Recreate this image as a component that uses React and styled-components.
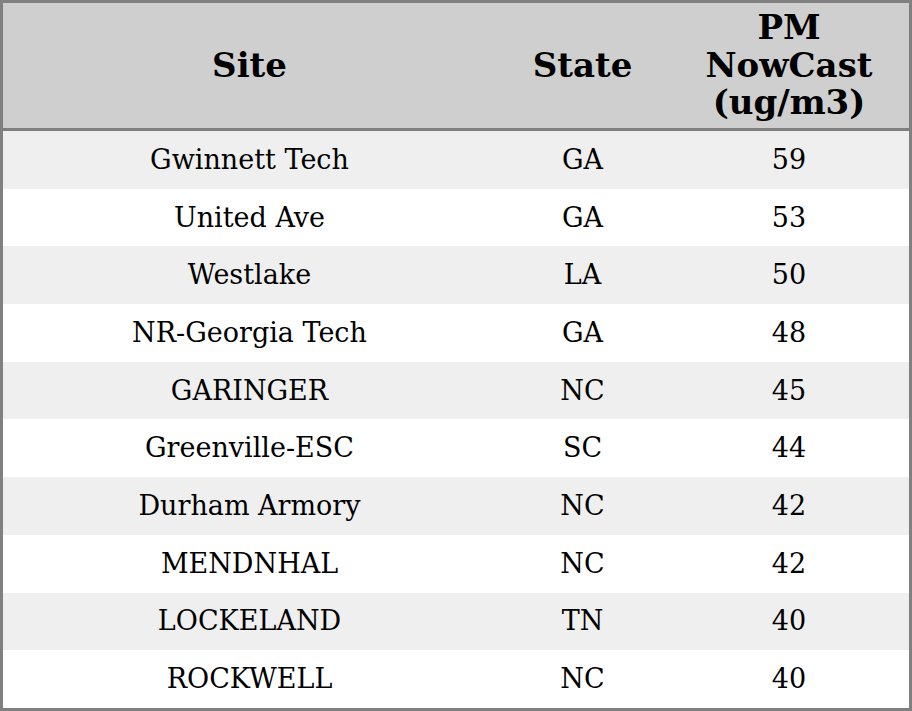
import styled, { createGlobalStyle } from "styled-components";

const rows = [
  ["Gwinnett Tech", "GA", 59],
  ["United Ave", "GA", 53],
  ["Westlake", "LA", 50],
  ["NR-Georgia Tech", "GA", 48],
  ["GARINGER", "NC", 45],
  ["Greenville-ESC", "SC", 44],
  ["Durham Armory", "NC", 42],
  ["MENDNHAL", "NC", 42],
  ["LOCKELAND", "TN", 40],
  ["ROCKWELL", "NC", 40],
];

const GlobalStyle = createGlobalStyle`
  html, body {
    margin: 0;
    padding: 0;
    background: #fff;
  }
  body {
    font-family: "DejaVu Serif", serif;
    color: #000;
  }
`;

const Table = styled.table`
  width: 912px;
  border-collapse: separate;
  border-spacing: 0;
  table-layout: fixed;
  border: 3px solid #808080;
  box-sizing: border-box;
  font-family: "DejaVu Serif", serif;
`;

const HeadRow = styled.tr`
  background: #cfcfcf;
`;

const Th = styled.th`
  height: 125px;
  padding: 0 6px;
  box-sizing: content-box;
  border-bottom: 3px solid #808080;
  font-size: 34px;
  font-weight: bold;
  line-height: 37.5px;
  text-align: center;
  vertical-align: middle;
`;

const Row = styled.tr`
  background: ${(p) => (p.$odd ? "#efefef" : "#ffffff")};
`;

const Td = styled.td`
  height: 57.7px;
  padding: 0;
  box-sizing: border-box;
  font-size: 27px;
  line-height: 30px;
  text-align: center;
  vertical-align: middle;
`;

const App = () => {
  return (
    <>
      <GlobalStyle />
      <Table>
        <colgroup>
          <col style={{ width: 493 }} />
          <col style={{ width: 173 }} />
          <col style={{ width: 240 }} />
        </colgroup>
        <thead>
          <HeadRow>
            <Th>Site</Th>
            <Th>State</Th>
            <Th>
              PM
              <br />
              NowCast
              <br />
              (ug/m3)
            </Th>
          </HeadRow>
        </thead>
        <tbody>
          {rows.map(([site, state, pm], i) => (
            <Row key={site} $odd={i % 2 === 0}>
              <Td>{site}</Td>
              <Td>{state}</Td>
              <Td>{pm}</Td>
            </Row>
          ))}
        </tbody>
      </Table>
    </>
  );
};

export default App;
